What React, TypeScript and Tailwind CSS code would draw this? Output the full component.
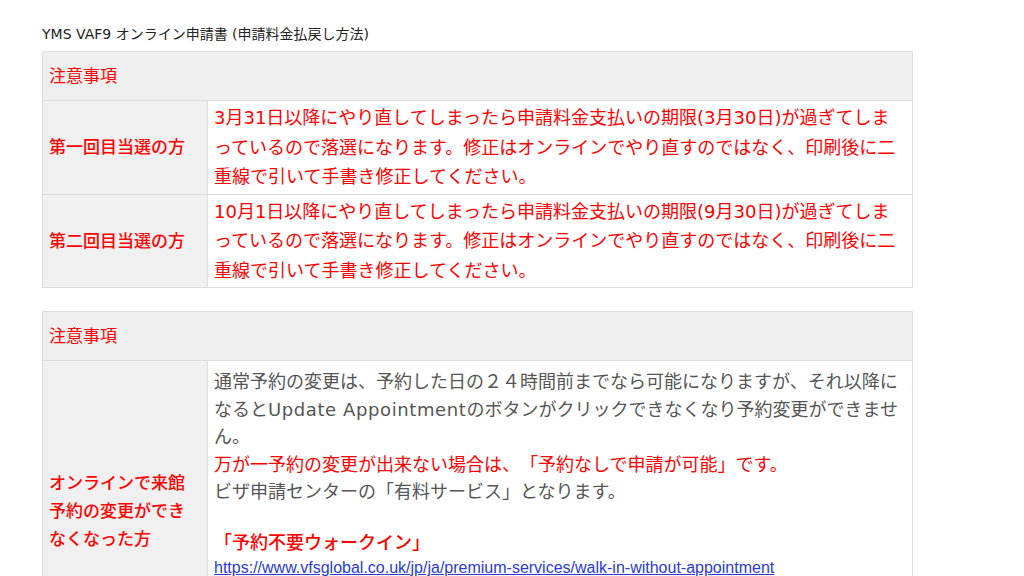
const jp = '"DejaVu Sans", "Noto Sans CJK JP", sans-serif';

function HeaderRow() {
  return (
    <tr>
      <th
        colSpan={2}
        className="h-[49px] border border-[#dddddd] bg-[#efefef] px-[6px] pt-[2px] text-left align-middle text-[17px] font-normal text-[#ff0000]"
      >
        注意事項
      </th>
    </tr>
  );
}

function LabelCell({ children }: { children: React.ReactNode }) {
  return (
    <td className="w-[165px] border border-[#dddddd] bg-[#f0f0f0] px-[6px] align-middle text-[17px] font-medium leading-[28px] text-[#ff0000]">
      {children}
    </td>
  );
}

export default function App() {
  return (
    <div
      className="min-h-screen bg-white pt-[25px] pl-[42px] [text-spacing-trim:space-all]"
      style={{ fontFamily: jp }}
    >
      <h1 className="mb-[7px] text-[14px] font-normal leading-[19px] text-[#222222]">
        YMS VAF9 オンライン申請書 (申請料金払戻し方法)
      </h1>

      <table className="w-[871px] border-collapse">
        <tbody>
          <HeaderRow />
          <tr>
            <LabelCell>第一回目当選の方</LabelCell>
            <td className="border border-[#dddddd] bg-white px-[6px] py-[2px] align-middle text-[18px] leading-[29.5px] text-[#ff0000]">
              3月31日以降にやり直してしまったら申請料金支払いの期限(3月30日)が過ぎてしまっているので落選になります。修正はオンラインでやり直すのではなく、印刷後に二重線で引いて手書き修正してください。
            </td>
          </tr>
          <tr>
            <LabelCell>第二回目当選の方</LabelCell>
            <td className="border border-[#dddddd] bg-white px-[6px] py-[2px] align-middle text-[18px] leading-[29.5px] text-[#ff0000]">
              10月1日以降にやり直してしまったら申請料金支払いの期限(9月30日)が過ぎてしまっているので落選になります。修正はオンラインでやり直すのではなく、印刷後に二重線で引いて手書き修正してください。
            </td>
          </tr>
        </tbody>
      </table>

      <table className="mt-[23px] w-[871px] border-collapse">
        <tbody>
          <HeaderRow />
          <tr>
            <LabelCell>オンラインで来館予約の変更ができなくなった方</LabelCell>
            <td className="border border-[#dddddd] bg-white px-[6px] pt-[7px] pb-[80px] align-top text-[18px] leading-[27.5px] text-[#555555]">
              <p>
                通常予約の変更は、予約した日の２４時間前までなら可能になりますが、それ以降になると
                <span className="tracking-[0.6px]">Update Appointment</span>
                のボタンがクリックできなくなり予約変更ができません。
              </p>
              <p className="text-[#ff0000]">
                万が一予約の変更が出来ない場合は、「予約なしで申請が可能」です。
              </p>
              <p>ビザ申請センターの「有料サービス」となります。</p>
              <p className="mt-[23px] font-medium text-[#ff0000]">「予約不要ウォークイン」</p>
              <a
                href="#"
                className="block text-[16px] leading-[24px] text-[#2a3ad6] underline"
                style={{ fontFamily: '"Liberation Sans", sans-serif' }}
              >
                https://www.vfsglobal.co.uk/jp/ja/premium-services/walk-in-without-appointment
              </a>
            </td>
          </tr>
        </tbody>
      </table>
    </div>
  );
}
